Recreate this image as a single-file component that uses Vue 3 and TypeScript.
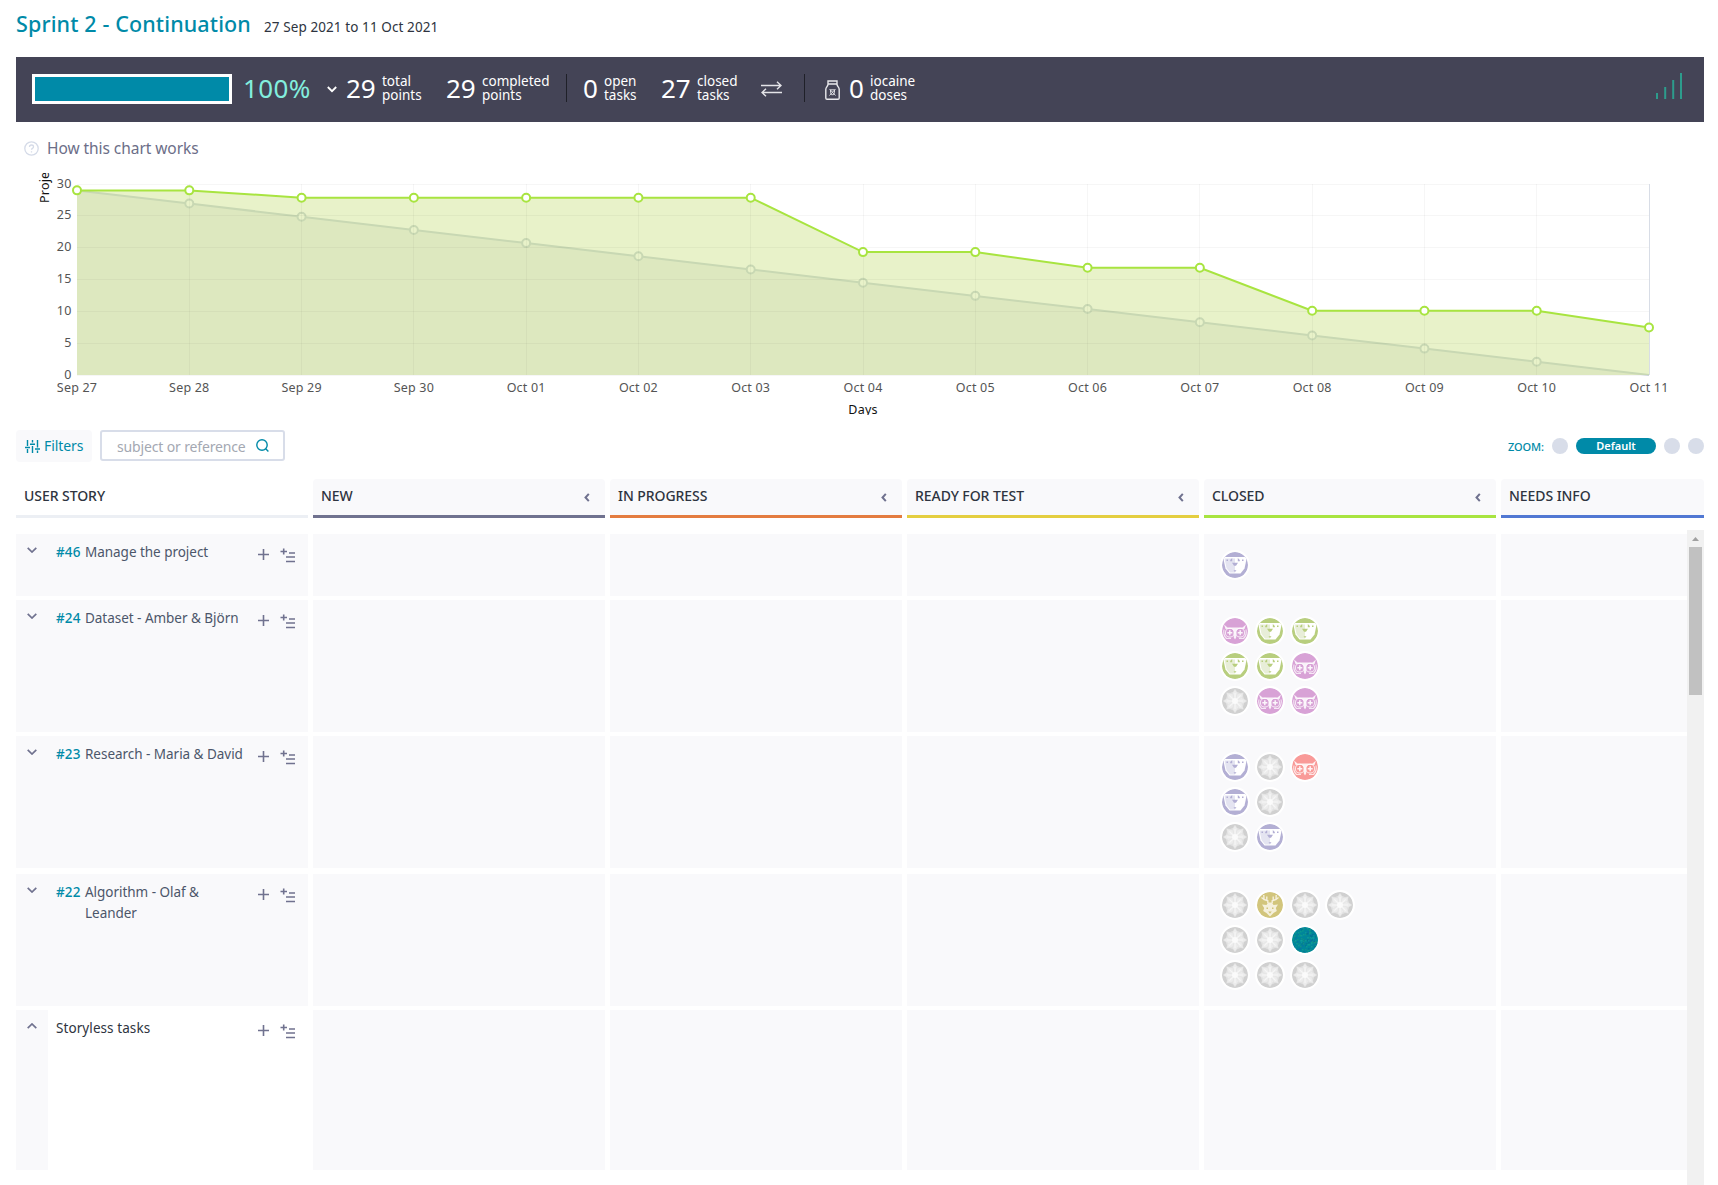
<script setup lang="ts">
type Avatar = 'bear-violet' | 'bear-green' | 'owl-pink' | 'owl-red' | 'star' | 'deer' | 'teal'

interface Column { name: string; color: string }
interface Story { ref: string; lines: string[]; size: string; closed: Avatar[][] }

const columns: Column[] = [
  { name: 'NEW', color: '#70728f' },
  { name: 'IN PROGRESS', color: '#e47c40' },
  { name: 'READY FOR TEST', color: '#e4ce40' },
  { name: 'CLOSED', color: '#a8e440' },
  { name: 'NEEDS INFO', color: '#5178d3' },
]

const stories: Story[] = [
  { ref: '#46', lines: ['Manage the project'], size: 'short', closed: [['bear-violet']] },
  {
    ref: '#24', lines: ['Dataset - Amber & Björn'], size: 'tall',
    closed: [['owl-pink', 'bear-green', 'bear-green'], ['bear-green', 'bear-green', 'owl-pink'], ['star', 'owl-pink', 'owl-pink']],
  },
  {
    ref: '#23', lines: ['Research - Maria & David'], size: 'tall spaced',
    closed: [['bear-violet', 'star', 'owl-red'], ['bear-violet', 'star'], ['star', 'bear-violet']],
  },
  {
    ref: '#22', lines: ['Algorithm - Olaf &', 'Leander'], size: 'tall',
    closed: [['star', 'deer', 'star', 'star'], ['star', 'star', 'teal'], ['star', 'star', 'star']],
  },
  { ref: '', lines: ['Storyless tasks'], size: 'storyless', closed: [] },
]

// Burndown chart
const left = 77
const right = 1649
const top = 184
const bottom = 375
const days = ['Sep 27', 'Sep 28', 'Sep 29', 'Sep 30', 'Oct 01', 'Oct 02', 'Oct 03', 'Oct 04', 'Oct 05', 'Oct 06', 'Oct 07', 'Oct 08', 'Oct 09', 'Oct 10', 'Oct 11']
const ticks = [30, 25, 20, 15, 10, 5, 0]
const remaining = [29, 29, 27.85, 27.85, 27.85, 27.85, 27.85, 19.3, 19.3, 16.85, 16.85, 10.1, 10.1, 10.1, 7.45]
const xAt = (i: number): number => left + (i * (right - left)) / 14
const yAt = (v: number): number => bottom - (v * (bottom - top)) / 30
const actual = remaining.map((v, i) => ({ x: xAt(i), y: yAt(v) }))
const ideal = days.map((_, i) => ({ x: xAt(i), y: yAt(29 - (29 * i) / 14) }))
const line = (pts: { x: number; y: number }[]): string => pts.map(p => `${p.x.toFixed(1)},${p.y.toFixed(1)}`).join(' ')
const area = (pts: { x: number; y: number }[]): string => `${line(pts)} ${right},${bottom} ${left},${bottom}`

const petals = [0, 45, 90, 135, 180, 225, 270, 315]

// Speckles of the teal avatar
const tealShades = ['#12a68c', '#0a6ea6', '#10a0a0', '#056f88', '#1b9a80']
const speckles = Array.from({ length: 170 }, (_, i) => {
  const h = (i * 7919 + i * i * 131) % 6761
  return { x: h % 26, y: Math.floor(h / 26) % 26, c: tealShades[h % 5] }
})
</script>

<template>
  <main class="page">
    <svg class="defs" width="0" height="0" aria-hidden="true">
      <defs>
        <clipPath id="disc"><circle cx="13" cy="13" r="13" /></clipPath>
      </defs>
    </svg>

    <header class="title">
      <h1>Sprint 2 - Continuation</h1>
      <span class="dates">27 Sep 2021 to 11 Oct 2021</span>
    </header>

    <section class="summary">
      <div class="progress"></div>
      <span class="percent">100%</span>
      <svg class="chev" width="10" height="7" viewBox="0 0 10 7"><path d="M.8 1 5 5.2 9.2 1" /></svg>
      <b class="num n2">29</b><span class="lbl l1">total<br>points</span>
      <b class="num n2">29</b><span class="lbl l2">completed<br>points</span>
      <i class="sep"></i>
      <b class="num n1 after">0</b><span class="lbl l3">open<br>tasks</span>
      <b class="num n2">27</b><span class="lbl l4">closed<br>tasks</span>
      <svg class="swap" width="21" height="16" viewBox="0 0 21 16">
        <path d="M0 4.5H20M16 .8 20 4.5 16 8.2M21 11.5H1M5 7.8 1 11.5 5 15.2" />
      </svg>
      <i class="sep second"></i>
      <svg class="jar" width="15" height="20" viewBox="0 0 15 20">
        <path d="M3 1h9v3H3zM3 4.500C2.500 7 .8 7 .8 9.500V18q0 1.200 1.200 1.200h11q1.200 0 1.200-1.200V9.500C14.200 7 12.500 7 12 4.500" />
        <path class="thin" d="M4.500 9 10.500 15.500M10.500 9 4.500 15.500M5.500 9.800h4v2.700l-1 2.200h-2l-1-2.200z" />
      </svg>
      <b class="num n1 dose">0</b><span class="lbl">iocaine<br>doses</span>
      <svg class="bars" width="26" height="26" viewBox="0 0 26 26">
        <path d="M0 20h2v6H0zM8.200 14h2v12h-2zM16.200 7h2v19h-2zM24 0h2v26h-2z" />
      </svg>
    </section>

    <div class="help">
      <svg width="15" height="15" viewBox="0 0 15 15">
        <circle cx="7.500" cy="7.500" r="6.700" />
        <path d="M5.500 6q0-2 2-2t2 1.800q0 1-1 1.500t-1 1.500M7.500 10.200v1.200" />
      </svg>
      <span>How this chart works</span>
    </div>

    <svg class="chart" width="1688" height="242" viewBox="16 173 1688 242">
      <text class="axis" transform="translate(49 203) rotate(-90)">Project points</text>
      <polygon class="idealArea" :points="area(ideal)" />
      <polyline class="idealLine" :points="line(ideal)" />
      <circle v-for="(p, i) in ideal.slice(1, 14)" :key="'i' + i" class="idealDot" :cx="p.x" :cy="p.y" r="4" />
      <polygon class="actualArea" :points="area(actual)" />
      <g class="grid">
        <line v-for="t in ticks" :key="t" :x1="left" :x2="right" :y1="Math.floor(yAt(t)) + .5" :y2="Math.floor(yAt(t)) + .5" />
        <line v-for="(d, i) in days.slice(1, 14)" :key="d" :x1="Math.floor(xAt(i + 1)) + .5" :x2="Math.floor(xAt(i + 1)) + .5" :y1="top" :y2="bottom" />
      </g>
      <path class="frame" :d="`M${right + .5} ${top}V${bottom}`" />
      <polyline class="actualLine" :points="line(actual)" />
      <circle v-for="(p, i) in actual" :key="'a' + i" class="actualDot" :cx="p.x" :cy="p.y" r="4" />
      <text v-for="t in ticks" :key="'t' + t" class="tick end" x="71.500" :y="Math.floor(yAt(t)) + 4">{{ t }}</text>
      <text v-for="(d, i) in days" :key="'d' + d" class="tick" :x="xAt(i)" y="392">{{ d }}</text>
      <text class="axis mid" x="863" y="414">Days</text>
    </svg>

    <div class="toolbar">
      <button class="filters">
        <svg width="15" height="13" viewBox="0 0 15 13">
          <path d="M2.500 0v6M2.500 9v4M7.500 0v2.500M7.500 6v7M12.500 0v7.500M12.500 10.500V13M0 7.500h5M5 4.200h5M10 9h5" />
        </svg>
        <span>Filters</span>
      </button>
      <div class="search">
        <span>subject or reference</span>
        <svg width="13" height="13" viewBox="0 0 13 13"><circle cx="6" cy="6" r="5.200" /><path d="M9.700 9.700 12.400 12.400" /></svg>
      </div>
      <div class="zoom">
        <span class="zl">ZOOM:</span><i></i><b>Default</b><i></i><i></i>
      </div>
    </div>

    <div class="heads">
      <div class="head us">USER STORY</div>
      <div v-for="(c, i) in columns" :key="c.name" class="head" :class="{ last: i === 4 }" :style="{ borderBottomColor: c.color }">
        <span>{{ c.name }}</span>
        <svg v-if="i < 4" width="6" height="9" viewBox="0 0 6 9"><path d="M4.800.800 1.500 4.500 4.800 8.200" /></svg>
      </div>
    </div>

    <div class="board">
      <div class="rows">
        <div v-for="s in stories" :key="s.lines[0]" class="row" :class="s.size">
          <div class="story">
            <span class="fold">
              <svg width="10" height="6" viewBox="0 0 10 6">
                <path :d="s.ref ? 'M.7.800 5 5 9.300.800' : 'M.7 5.200 5 1 9.300 5.200'" />
              </svg>
            </span>
            <span v-if="s.ref" class="ref">{{ s.ref }}</span>
            <span class="name"><template v-for="(l, k) in s.lines" :key="l"><br v-if="k">{{ l }}</template></span>
            <svg class="acts" width="37" height="16" viewBox="0 0 37 16">
              <path d="M0 7.500h11M5.500 2v11M22.500 4.500h6.500M25.700 1.500v6M31 6h6M28 10h9M28 14.500h9" />
            </svg>
          </div>
          <div v-for="(c, i) in columns" :key="c.name" class="cell" :class="{ last: i === 4 }">
            <template v-if="i === 3">
              <div v-for="(group, k) in s.closed" :key="k" class="avatars">
                <svg v-for="(a, n) in group" :key="n" class="avatar" :class="a" width="26" height="26" viewBox="0 0 26 26">
                  <g clip-path="url(#disc)">
                    <rect class="bg" width="26" height="26" />
                    <template v-if="a.startsWith('bear')">
                      <path class="face" d="M1.500 5h23v2l-1 5-1 4.500-4 5H7.500l-4-5-1-4.500-1-5z" />
                      <path class="tint" d="M2.500 6.500H13V20.500H8L4.500 16z" />
                      <path class="mark" d="M8.200 8l2-2v3.200H8.200zM17.800 8l-2-2v3.200h2zM10 10.800h6l-2 3h-2zM11.500 18.200h3L13 20zM4.500 7.500H6V9H4.500zM20 7.500h1.500V9H20z" />
                    </template>
                    <template v-else-if="a.startsWith('owl')">
                      <path class="fill" d="M2 6.500 5.500 9.500H20.500L24 6.500 22.500 11H16L14.200 13V19.500L13 21.500 11.800 19.500V13L10 11H3.500z" />
                      <circle class="stroke" cx="7.800" cy="14.700" r="4.400" /><circle class="stroke" cx="18.200" cy="14.700" r="4.400" />
                      <path class="stroke plus" d="M7.800 12.200v5M5.300 14.700h5M18.200 12.200v5M15.700 14.700h5" />
                      <path class="stroke" d="M2 11.500Q.800 17 4.500 20.500H9M24 11.500q1.200 5.500-2.500 9H17" />
                    </template>
                    <template v-else-if="a === 'star'">
                      <circle class="halo" cx="13" cy="13" r="9.500" />
                      <path v-for="r in petals" :key="r" class="petal" d="M13 13 9.500 6.500 13 1.200 16.500 6.500z" :transform="`rotate(${r} 13 13)`" />
                      <path v-for="r in petals" :key="'v' + r" class="vein" d="M13 13V5" :transform="`rotate(${r} 13 13)`" />
                      <circle class="core" cx="13" cy="13" r="3" />
                    </template>
                    <template v-else-if="a === 'deer'">
                      <path class="stroke" d="M10.800 11V8.800L7 7.500 6.800 3M7 7.500 4.500 5.500M9.800 8.500V4.500M15.200 11V8.800L19 7.500 19.200 3M19 7.500 21.500 5.500M16.200 8.500V4.500" />
                      <path class="fill" d="M5 12.500 9.500 13 11 10.500h4L16.500 13 21 12.500 18.800 16 19.800 19 16.500 21 13 24.500 9.500 21 6.200 19 7.200 16z" />
                      <path class="mark" d="M9.500 15.500H11V17H9.500zM15 15.500h1.500V17H15zM11.200 19.500h3.600L13 21.800z" />
                    </template>
                    <template v-else>
                      <rect v-for="(p, m) in speckles" :key="m" :x="p.x" :y="p.y" width="1.500" height="1.500" :fill="p.c" opacity=".6" />
                    </template>
                  </g>
                </svg>
              </div>
            </template>
          </div>
        </div>
      </div>
      <div class="scroll">
        <svg width="17" height="17" viewBox="0 0 17 17"><path d="M5 11h7L8.500 7z" /></svg>
        <div class="thumb"></div>
      </div>
    </div>
  </main>
</template>

<style>
html, body { margin: 0; background: #fff; overflow: hidden; }
</style>

<style scoped>
.page { box-sizing: border-box; width: 1718px; height: 1185px; padding: 0 14px 0 16px; overflow: hidden; background: #fff; color: #2e3440; font: 13.5px/21px "Noto Sans", "Open Sans", sans-serif; }
.page svg { display: block; flex: none; fill: none; }
.page .defs { position: absolute; }
.title { display: flex; align-items: baseline; height: 48px; padding-top: 9px; }
h1 { width: 248px; margin: 0; color: #008aa8; font-size: 21.5px; line-height: 30px; font-weight: 500; letter-spacing: .13px; white-space: nowrap; }
.dates { letter-spacing: .09px; }

.summary { display: flex; align-items: center; height: 65px; padding: 0 22px 0 16px; background: #444456; color: #fff; }
.summary > * { flex: none; }
.progress { box-sizing: border-box; width: 200px; height: 30px; border: 3px solid #fff; background: #008aa8; margin-bottom: 1px; }
.percent { width: 84px; margin: 0 0 3px 11px; color: #83eede; font-size: 26px; letter-spacing: .35px; }
.chev { margin-right: 9px; stroke: #fff; stroke-width: 1.8; margin-bottom: 1px; }
.num { font-size: 26px; font-weight: 400; letter-spacing: 0; margin-bottom: 3px; }
.n2 { width: 36px; }
.n1 { width: 21px; }
.after { margin-left: 16px; }
.dose { margin-left: 9px; }
.lbl { line-height: 14px; margin-bottom: 4px; letter-spacing: 0; }
.l1 { width: 64px; }
.l2 { width: 84px; }
.l3 { width: 57px; }
.l4 { width: 64px; }
.sep { width: 1px; height: 28px; margin-bottom: 3px; background: #1f2028; }
.second { margin: 0 20px 3px 22px; }
.swap { stroke: #e4e4e8; stroke-width: 1.4; margin-bottom: 1px; }
.jar { stroke: #e8e8ec; stroke-width: 1.4; }
.jar .thin { stroke-width: .9; }
.bars { margin: 0 0 7px auto; }
.bars path { fill: #2d9c8c; }

.help { display: flex; align-items: center; height: 51px; padding-left: 8px; color: #6c6e88; font-size: 15.5px; letter-spacing: -.06px; }
.help svg { margin: 2px 9px 0 0; stroke: #d5dbe8; stroke-width: 1.3; }
.help span { margin: 2px 0 0 -1px; }

.chart { overflow: hidden; }
.grid line { stroke: rgba(0, 0, 0, .035); stroke-width: 1; }
.frame { stroke: #d8dde6; stroke-width: 1; }
.idealArea { fill: rgba(170, 180, 180, .19); }
.idealLine { stroke: #d0d8de; stroke-width: 2; }
.idealDot { stroke: #d0d8de; stroke-width: 2; fill: #fff; }
.actualArea { fill: rgba(186, 216, 92, .33); }
.actualLine { stroke: #a8e440; stroke-width: 2; }
.actualDot { stroke: #a8e440; stroke-width: 2; fill: #fff; }
.tick { fill: #545454; font-size: 12.5px; letter-spacing: .2px; text-anchor: middle; }
.end { text-anchor: end; }
.axis { fill: #111; font-size: 12.5px; letter-spacing: .2px; }
.mid { text-anchor: middle; }

.toolbar { display: flex; align-items: flex-start; margin-top: 15px; height: 49px; }
.filters { display: flex; align-items: center; box-sizing: border-box; width: 76px; height: 32px; padding: 0 0 0 9px; border: 0; border-radius: 4px; background: #f9f9fb; color: #008aa8; font: 14px/21px "Noto Sans", sans-serif; letter-spacing: -.08px; }
.filters svg { margin-right: 4px; stroke: #008aa8; stroke-width: 1.4; }
.filters span { margin-bottom: 1px; }
.search { display: flex; align-items: center; box-sizing: border-box; width: 185px; height: 31px; margin-left: 8px; padding-left: 15px; border: 2px solid #d8dde9; border-radius: 3px; color: #a4a8b2; font-size: 14px; letter-spacing: -.15px; white-space: nowrap; }
.search span { width: 139px; padding-top: 2px; }
.search svg { stroke: #008aa8; stroke-width: 1.4; }
.zoom { display: flex; align-items: center; gap: 8px; height: 16px; margin: 8px 0 0 auto; font-size: 11px; }
.zl { color: #008aa8; font-weight: 500; letter-spacing: -.1px; }
.zoom i { width: 16px; height: 16px; border-radius: 50%; background: #d8dde9; }
.zoom b { width: 80px; height: 16px; border-radius: 8px; background: #008aa8; color: #fff; font-weight: 600; line-height: 16px; text-align: center; }

.heads { display: flex; gap: 5px; height: 39px; }
.head { display: flex; align-items: center; justify-content: space-between; box-sizing: border-box; width: 292px; padding: 0 15px 0 8px; border-bottom: 3px solid #eceff4; border-radius: 4px 4px 0 0; background: #f9f9fb; color: #2e3440; font-size: 14px; font-weight: 500; white-space: nowrap; letter-spacing: -.06px; }
.head:not(.last) { flex: none; }
.head.last { flex: 1; }
.head span { padding-bottom: 4px; }
.head.us { background: #fff; padding-bottom: 4px; }
.head svg { stroke: #70728f; stroke-width: 2; }

.board { display: flex; margin-top: 12px; height: 655px; }
.rows { flex: 1; padding-top: 4px; }
.row { display: flex; gap: 5px; margin-bottom: 4px; }
.short { height: 62px; }
.tall { height: 132px; }
.spaced { margin-bottom: 6px; }
.storyless { height: 160px; }
.story { display: flex; flex: none; align-items: flex-start; box-sizing: border-box; width: 292px; background: #f9f9fb; }
.cell { flex: none; box-sizing: border-box; width: 292px; padding: 18px; background: #f9f9fb; }
.cell.last { flex: 1; width: auto; padding: 0; }
.fold { align-self: stretch; flex: none; width: 21px; padding: 13px 0 0 11px; }
.fold svg { stroke: #70728f; stroke-width: 1.7; }
.ref { width: 29px; margin-left: 8px; padding-top: 8px; color: #008aa8; font-weight: 500; letter-spacing: .11px; }
.name { padding-top: 8px; color: #4c566a; letter-spacing: -.03px; white-space: nowrap; }
.acts { margin: 13px 13px 0 auto; stroke: #70728f; stroke-width: 1.6; }
.storyless .story { background: #fff; }
.storyless .fold { background: #f9f9fb; }
.storyless .name { color: #2e3440; margin-left: 8px; letter-spacing: .08px; }

.avatars { display: flex; gap: 9px; margin-bottom: 9px; }
.avatar { border-radius: 50%; box-shadow: 0 0 0 2px #fff; }
.bear-violet .bg, .bear-violet .mark { fill: #b3afd4; }
.bear-violet .tint { fill: #e4e4f1; }
.bear-green .bg, .bear-green .mark { fill: #b8ce7e; }
.bear-green .tint { fill: #e8eed8; }
.face { fill: #fff; }
.owl-pink .bg { fill: #d8a2d6; }
.owl-red .bg { fill: #f99a98; }
.owl-pink .stroke, .owl-red .stroke { stroke: #fff; stroke-width: 1.1; opacity: .75; }
.owl-pink .plus, .owl-red .plus { stroke-width: 1.5; opacity: .9; }
.owl-pink .fill, .owl-red .fill { fill: #fff; opacity: .85; }
.star .bg { fill: #d0d0d0; }
.halo { fill: #dedede; }
.petal { fill: #ececec; stroke: #e0e0e0; stroke-width: .5; }
.vein { stroke: #f6f6f6; stroke-width: 1.2; }
.core { fill: #fdfdfd; opacity: .8; }
.deer .bg, .deer .mark { fill: #d2c57c; }
.deer .fill { fill: #f5f0dc; }
.deer .stroke { stroke: #f5f0dc; stroke-width: 1.4; }
.teal .bg { fill: #00869a; }

.scroll { width: 17px; background: #f1f1f1; }
.scroll path { fill: #a0a0a0; }
.thumb { width: 13px; height: 148px; margin-left: 2px; background: #c1c1c1; }
</style>
